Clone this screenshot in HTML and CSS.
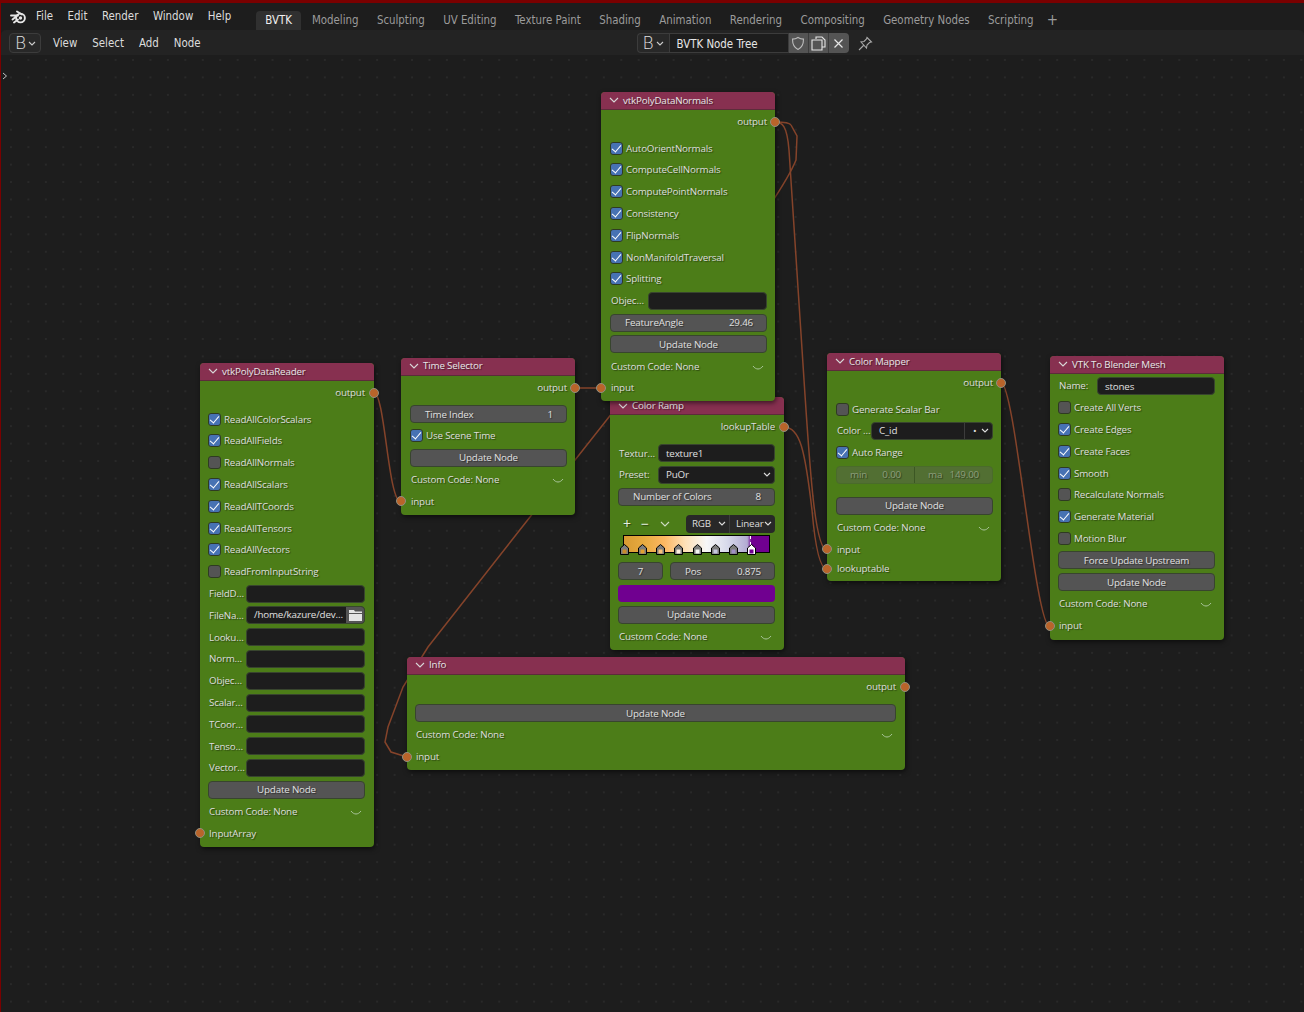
FILE: index.html
```html
<!DOCTYPE html>
<html lang="en">
<head>
  <meta charset="UTF-8">
  <title>BVTK Node Tree</title>
  <link rel="stylesheet" href="styles.css">
</head>
<body>
  <!-- Top bar -->
  <div class="topbar">
    <svg class="logo" width="17" height="14" viewBox="0 0 17 14"><circle cx="10.500" cy="8" r="4.400" fill="none" stroke="#e6e6e6" stroke-width="1.900"/><circle cx="10.500" cy="8" r="1.700" fill="#e6e6e6"/><path d="M1 5.500h7M2.500 9.500 8 5M4 12.500l4-3M7 1.500l5 3" stroke="#e6e6e6" stroke-width="1.900" stroke-linecap="round" fill="none"/></svg>
    <nav class="menu">
      <span>File</span><span>Edit</span><span>Render</span><span>Window</span><span>Help</span>
    </nav>
    <div class="tabs">
      <span class="tab active">BVTK</span>
      <span class="tab">Modeling</span>
      <span class="tab">Sculpting</span>
      <span class="tab">UV Editing</span>
      <span class="tab">Texture Paint</span>
      <span class="tab">Shading</span>
      <span class="tab">Animation</span>
      <span class="tab">Rendering</span>
      <span class="tab">Compositing</span>
      <span class="tab">Geometry Nodes</span>
      <span class="tab">Scripting</span>
      <span class="tab plus">+</span>
    </div>
  </div>

  <!-- Editor header -->
  <div class="header">
    <div class="editor-btn"><span class="b-icon">B</span><svg class="caret" width="8" height="5" viewBox="0 0 8 5"><path d="M1 1l3 3 3-3" fill="none" stroke="#ccc" stroke-width="1.100"/></svg></div>
    <nav class="editor-menu">
      <span>View</span><span>Select</span><span>Add</span><span>Node</span>
    </nav>
    <div class="tree-picker">
      <div class="tree-type"><span class="b-icon">B</span><svg class="caret" width="8" height="5" viewBox="0 0 8 5"><path d="M1 1l3 3 3-3" fill="none" stroke="#ccc" stroke-width="1.100"/></svg></div>
      <div class="tree-name">BVTK Node Tree</div>
      <div class="tree-btn"><svg width="14" height="15" viewBox="0 0 14 15"><path d="M7 1.500c2 1.200 3.800 1.600 5.500 1.600 0 5-1.500 8.700-5.500 10.400C3 11.800 1.500 8.100 1.500 3.100 3.200 3.100 5 2.700 7 1.500z" fill="none" stroke="#bdbdbd" stroke-width="1.100"/></svg></div>
      <div class="tree-btn"><svg width="15" height="15" viewBox="0 0 15 15"><path d="M5 3V1h6l3 3v7h-3M1 4h10v10H1z" fill="none" stroke="#e6e6e6" stroke-width="1.100"/></svg></div>
      <div class="tree-btn last"><svg width="11" height="11" viewBox="0 0 11 11"><path d="M1.500 1.500l8 8M9.500 1.500l-8 8" stroke="#e6e6e6" stroke-width="1.200"/></svg></div>
    </div>
    <svg class="pin" width="15" height="15" viewBox="0 0 15 15"><path d="M1 14l4.500-4.500M9 1.500l4.500 4.500-2 .5-2.500 2.500-.5 3L3 6l3-.5L8.500 3z" fill="none" stroke="#a8a8a8" stroke-width="1.100"/></svg>
  </div>

  <!-- Node canvas -->
  <div class="canvas">
    <svg class="sidebar-arrow" width="6" height="8" viewBox="0 0 6 8"><path d="M1 1l3.500 3L1 7" fill="none" stroke="#c4c4c4" stroke-width="1"/></svg>

    <svg class="wires" width="1304" height="957" viewBox="1 55 1304 957">
      <path d="M374 393C385 393 388 502 401 502"/>
      <path d="M575 388H601"/>
      <path d="M775 122C782 122 787 125 789 150L805 395C810 470 815 550 827 550"/>
      <path d="M775 122C785 122 790 123 791 125L797 136L796 160C790 175 780 190 770 205L609 417L530 517L428 647L403 687L388 727L385 742L391 752L407 757"/>
      <path d="M784 427C800 427 805 450 812 510C815 545 820 569 827 569"/>
      <path d="M1001 383C1015 383 1035 627 1050 627"/>
    </svg>

    <!-- Color Ramp sits behind vtkPolyDataNormals -->
    <section class="node node-ramp">
      <div class="node-title"><svg class="title-caret" width="10" height="6" viewBox="0 0 10 6"><path d="M1 1l4 4 4-4"/></svg>Color Ramp</div>
      <div class="row out">lookupTable<i class="socket right"></i></div>
      <div class="row gap"><label>Textur…</label><div class="field">texture1</div></div>
      <div class="row"><label>Preset:</label><div class="field select">PuOr<svg width="8" height="5" viewBox="0 0 8 5"><path d="M1 1l3 3 3-3" fill="none" stroke="#ddd" stroke-width="1.100"/></svg></div></div>
      <div class="row"><div class="num"><span>Number of Colors</span><span>8</span></div></div>
      <div class="row ramp-tools">
        <span class="tool">+</span><span class="tool">−</span>
        <svg class="tool-caret" width="10" height="6" viewBox="0 0 10 6"><path d="M1 1l4 4 4-4" fill="none" stroke="#cfdcc4" stroke-width="1.100"/></svg>
        <div class="ramp-mode"><span>RGB<svg width="8" height="5" viewBox="0 0 8 5"><path d="M1 1l3 3 3-3" fill="none" stroke="#ddd" stroke-width="1.100"/></svg></span><span>Linear<svg width="8" height="5" viewBox="0 0 8 5"><path d="M1 1l3 3 3-3" fill="none" stroke="#ddd" stroke-width="1.100"/></svg></span></div>
      </div>
      <div class="ramp">
        <div class="ramp-active"></div>
        <div class="ramp-handles">
          <svg class="handle" style="--c:#c98a2a" width="9" height="11" viewBox="0 0 9 11"><path d="M.5 10.500V4L4.500.5l4 3.500v6.500z"/><rect x="2.500" y="5.500" width="4" height="4"/></svg>
          <svg class="handle" style="--c:#e0a030" width="9" height="11" viewBox="0 0 9 11"><path d="M.5 10.500V4L4.500.5l4 3.500v6.500z"/><rect x="2.500" y="5.500" width="4" height="4"/></svg>
          <svg class="handle" style="--c:#f7c27a" width="9" height="11" viewBox="0 0 9 11"><path d="M.5 10.500V4L4.500.5l4 3.500v6.500z"/><rect x="2.500" y="5.500" width="4" height="4"/></svg>
          <svg class="handle" style="--c:#fdeedd" width="9" height="11" viewBox="0 0 9 11"><path d="M.5 10.500V4L4.500.5l4 3.500v6.500z"/><rect x="2.500" y="5.500" width="4" height="4"/></svg>
          <svg class="handle" style="--c:#f4f4f4" width="9" height="11" viewBox="0 0 9 11"><path d="M.5 10.500V4L4.500.5l4 3.500v6.500z"/><rect x="2.500" y="5.500" width="4" height="4"/></svg>
          <svg class="handle" style="--c:#c6c6e0" width="9" height="11" viewBox="0 0 9 11"><path d="M.5 10.500V4L4.500.5l4 3.500v6.500z"/><rect x="2.500" y="5.500" width="4" height="4"/></svg>
          <svg class="handle" style="--c:#a090c4" width="9" height="11" viewBox="0 0 9 11"><path d="M.5 10.500V4L4.500.5l4 3.500v6.500z"/><rect x="2.500" y="5.500" width="4" height="4"/></svg>
          <svg class="handle selected" style="--c:#700090" width="9" height="11" viewBox="0 0 9 11"><path d="M.5 10.500V4L4.500.5l4 3.500v6.500z"/><rect x="2.500" y="5.500" width="4" height="4"/></svg>
        </div>
      </div>
      <div class="row pos-row"><div class="num center index">7</div><div class="num"><span>Pos</span><span>0.875</span></div></div>
      <div class="row"><div class="swatch"></div></div>
      <div class="row"><button class="btn">Update Node</button></div>
      <div class="row custom">Custom Code: None<svg class="fold" width="12" height="6" viewBox="0 0 12 6"><path d="M1 1c3 4 7 4 10 0"/></svg></div>
    </section>

    <section class="node node-normals">
      <div class="node-title"><svg class="title-caret" width="10" height="6" viewBox="0 0 10 6"><path d="M1 1l4 4 4-4"/></svg>vtkPolyDataNormals</div>
      <div class="row out">output<i class="socket right"></i></div>
      <div class="row gap"><i class="check on"></i>AutoOrientNormals</div>
      <div class="row"><i class="check on"></i>ComputeCellNormals</div>
      <div class="row"><i class="check on"></i>ComputePointNormals</div>
      <div class="row"><i class="check on"></i>Consistency</div>
      <div class="row"><i class="check on"></i>FlipNormals</div>
      <div class="row"><i class="check on"></i>NonManifoldTraversal</div>
      <div class="row"><i class="check on"></i>Splitting</div>
      <div class="row"><label>Objec…</label><div class="field"></div></div>
      <div class="row"><div class="num"><span>FeatureAngle</span><span>29.46</span></div></div>
      <div class="row"><button class="btn">Update Node</button></div>
      <div class="row custom">Custom Code: None<svg class="fold" width="12" height="6" viewBox="0 0 12 6"><path d="M1 1c3 4 7 4 10 0"/></svg></div>
      <div class="row">input<i class="socket left"></i></div>
    </section>

    <section class="node node-reader">
      <div class="node-title"><svg class="title-caret" width="10" height="6" viewBox="0 0 10 6"><path d="M1 1l4 4 4-4"/></svg>vtkPolyDataReader</div>
      <div class="row out">output<i class="socket right"></i></div>
      <div class="row gap"><i class="check on"></i>ReadAllColorScalars</div>
      <div class="row"><i class="check on"></i>ReadAllFields</div>
      <div class="row"><i class="check"></i>ReadAllNormals</div>
      <div class="row"><i class="check on"></i>ReadAllScalars</div>
      <div class="row"><i class="check on"></i>ReadAllTCoords</div>
      <div class="row"><i class="check on"></i>ReadAllTensors</div>
      <div class="row"><i class="check on"></i>ReadAllVectors</div>
      <div class="row"><i class="check"></i>ReadFromInputString</div>
      <div class="row"><label>FieldD…</label><div class="field"></div></div>
      <div class="row"><label>FileNa…</label><div class="field file"><span>/home/kazure/dev…</span><b class="folder"><svg width="13" height="12" viewBox="0 0 13 12"><path d="M0 1h5l1 1.500h7V4H0zM0 5h13v7H0z" fill="#e4e4e4"/></svg></b></div></div>
      <div class="row"><label>Looku…</label><div class="field"></div></div>
      <div class="row"><label>Norm…</label><div class="field"></div></div>
      <div class="row"><label>Objec…</label><div class="field"></div></div>
      <div class="row"><label>Scalar…</label><div class="field"></div></div>
      <div class="row"><label>TCoor…</label><div class="field"></div></div>
      <div class="row"><label>Tenso…</label><div class="field"></div></div>
      <div class="row"><label>Vector…</label><div class="field"></div></div>
      <div class="row"><button class="btn">Update Node</button></div>
      <div class="row custom">Custom Code: None<svg class="fold" width="12" height="6" viewBox="0 0 12 6"><path d="M1 1c3 4 7 4 10 0"/></svg></div>
      <div class="row">InputArray<i class="socket left"></i></div>
    </section>

    <section class="node node-time">
      <div class="node-title"><svg class="title-caret" width="10" height="6" viewBox="0 0 10 6"><path d="M1 1l4 4 4-4"/></svg>Time Selector</div>
      <div class="row out">output<i class="socket right"></i></div>
      <div class="row gap"><div class="num"><span>Time Index</span><span>1</span></div></div>
      <div class="row"><i class="check on"></i>Use Scene Time</div>
      <div class="row"><button class="btn">Update Node</button></div>
      <div class="row custom">Custom Code: None<svg class="fold" width="12" height="6" viewBox="0 0 12 6"><path d="M1 1c3 4 7 4 10 0"/></svg></div>
      <div class="row">input<i class="socket left"></i></div>
    </section>

    <section class="node node-mapper">
      <div class="node-title"><svg class="title-caret" width="10" height="6" viewBox="0 0 10 6"><path d="M1 1l4 4 4-4"/></svg>Color Mapper</div>
      <div class="row out">output<i class="socket right"></i></div>
      <div class="row gap"><i class="check"></i>Generate Scalar Bar</div>
      <div class="row"><label>Color …</label><div class="field pick"><span>C_id</span><b>•<svg width="8" height="5" viewBox="0 0 8 5"><path d="M1 1l3 3 3-3" fill="none" stroke="#ddd" stroke-width="1.100"/></svg></b></div></div>
      <div class="row"><i class="check on"></i>Auto Range</div>
      <div class="row"><div class="range"><div><span>min</span><span>0.00</span></div><div><span>ma</span><span>149.00</span></div></div></div>
      <div class="row gap-lg"><button class="btn">Update Node</button></div>
      <div class="row custom">Custom Code: None<svg class="fold" width="12" height="6" viewBox="0 0 12 6"><path d="M1 1c3 4 7 4 10 0"/></svg></div>
      <div class="row">input<i class="socket left"></i></div>
      <div class="row tight">lookuptable<i class="socket left"></i></div>
    </section>

    <section class="node node-mesh">
      <div class="node-title"><svg class="title-caret" width="10" height="6" viewBox="0 0 10 6"><path d="M1 1l4 4 4-4"/></svg>VTK To Blender Mesh</div>
      <div class="row"><label>Name:</label><div class="field">stones</div></div>
      <div class="row"><i class="check"></i>Create All Verts</div>
      <div class="row"><i class="check on"></i>Create Edges</div>
      <div class="row"><i class="check on"></i>Create Faces</div>
      <div class="row"><i class="check on"></i>Smooth</div>
      <div class="row"><i class="check"></i>Recalculate Normals</div>
      <div class="row"><i class="check on"></i>Generate Material</div>
      <div class="row"><i class="check"></i>Motion Blur</div>
      <div class="row"><button class="btn">Force Update Upstream</button></div>
      <div class="row"><button class="btn">Update Node</button></div>
      <div class="row custom">Custom Code: None<svg class="fold" width="12" height="6" viewBox="0 0 12 6"><path d="M1 1c3 4 7 4 10 0"/></svg></div>
      <div class="row">input<i class="socket left"></i></div>
    </section>

    <section class="node node-info">
      <div class="node-title"><svg class="title-caret" width="10" height="6" viewBox="0 0 10 6"><path d="M1 1l4 4 4-4"/></svg>Info</div>
      <div class="row out">output<i class="socket right"></i></div>
      <div class="row gap"><button class="btn">Update Node</button></div>
      <div class="row custom">Custom Code: None<svg class="fold" width="12" height="6" viewBox="0 0 12 6"><path d="M1 1c3 4 7 4 10 0"/></svg></div>
      <div class="row">input<i class="socket left"></i></div>
    </section>
  </div>
</body>
</html>
```

FILE: styles.css
```css
/* Window */
* {
  box-sizing: border-box;
}
html, body {
  height: 100%;
}
body {
  margin: 0;
  display: flex;
  flex-direction: column;
  overflow: hidden;
  background-color: #1d1d1d;
  border-top: 3px solid #7a0000;
  border-left: 1px solid #7a0000;
  color: #dedede;
  font-family: "Open Sans", "DejaVu Sans", sans-serif;
  font-size: 9.800px;
  letter-spacing: -0.18px;
}

/* Top bar */
.topbar {
  height: 27px;
  flex: none;
  display: flex;
  align-items: center;
  background-color: #1d1d1d;
  font-family: "DejaVu Sans Condensed", "DejaVu Sans", sans-serif;
  font-size: 11.400px;
  letter-spacing: 0;
}
.logo {
  margin: 0 0 0 9px;
}
.menu {
  display: flex;
  gap: 14.500px;
  margin-left: 9px;
  padding-bottom: 2px;
  color: #dcdcdc;
}
.tabs {
  display: flex;
  align-items: flex-end;
  align-self: flex-end;
  margin-left: 25px;
  height: 20px;
  color: #9b9b9b;
}
.tab {
  height: 19px;
  padding: 2px 9.200px 0;
  white-space: nowrap;
}
.tab.active {
  margin-right: 1.500px;
  background-color: #303030;
  border-radius: 4px 4px 0 0;
  color: #f0f0f0;
}
.tab.plus {
  padding: 0 0 0 4px;
  font-size: 15px;
}

/* Editor header */
.header {
  height: 25px;
  flex: none;
  display: flex;
  align-items: center;
  padding: 1px 0 0 8px;
  background-color: #232323;
  border-radius: 5px 5px 0 0;
  font-family: "DejaVu Sans Condensed", "DejaVu Sans", sans-serif;
  font-size: 11.400px;
  letter-spacing: 0;
}
.editor-btn, .tree-type {
  height: 20px;
  display: flex;
  align-items: center;
  gap: 2px;
  padding-left: 5px;
  background-color: #282828;
  border: 1px solid #3c3c3c;
  border-radius: 4px;
}
.editor-btn {
  width: 32px;
}
.b-icon {
  font-family: "DejaVu Sans", sans-serif;
  font-weight: 200;
  font-size: 17px;
  line-height: 1;
  color: #e0e0e0;
}
.editor-menu {
  display: flex;
  gap: 15px;
  margin-left: 12px;
  color: #dcdcdc;
}
.tree-picker {
  display: flex;
  height: 20px;
  margin-left: 436px;
}
.tree-type {
  width: 32px;
  border-radius: 4px 0 0 4px;
  border-right: none;
}
.tree-name {
  width: 120px;
  padding: 3px 0 0 7px;
  background-color: #1d1d1d;
  border: 1px solid #3c3c3c;
  color: #e6e6e6;
}
.tree-btn {
  width: 20px;
  display: flex;
  align-items: center;
  justify-content: center;
  background-color: #545454;
  border-right: 1px solid #3c3c3c;
}
.tree-btn.last {
  border-right: none;
  border-radius: 0 4px 4px 0;
}
.pin {
  margin-left: 9px;
}

/* Canvas */
.canvas {
  position: relative;
  flex: 1;
  overflow: hidden;
  background-color: #1d1d1d;
  background-image: radial-gradient(circle at 1px 1px, #292929 1px, transparent 1.300px);
  background-size: 17.450px 17.450px;
  background-position: 9px 4px;
}
.sidebar-arrow {
  position: absolute;
  left: 1px;
  top: 17px;
}
.wires {
  position: absolute;
  left: 0;
  top: 0;
}
.wires path {
  fill: none;
  stroke: #84432a;
  stroke-width: 1.500;
}

/* Nodes */
.node {
  position: absolute;
  width: 174px;
  padding-bottom: 3px;
  background-color: #4c7d18;
  border-radius: 4px;
  box-shadow: 1px 2px 5px rgba(0,0,0,0.55);
  text-shadow: 1px 1px 1px rgba(0,0,0,0.45);
}
.node-reader { left: 199px; top: 308px; }
.node-time { left: 400px; top: 303px; }
.node-normals { left: 600px; top: 37px; padding-bottom: 2px; }
.node-ramp { left: 609px; top: 342px; padding-bottom: 2px; }
.node-mapper { left: 826px; top: 298px; }
.node-mesh { left: 1049px; top: 301px; }
.node-info { left: 406px; top: 602px; width: 498px; padding-bottom: 2px; }

.node-title {
  height: 18px;
  display: flex;
  align-items: center;
  padding: 0 0 1px 8px;
  background-color: #873050;
  border-bottom: 1px solid #5c2c3a;
  border-radius: 4px 4px 0 0;
  color: #e8e8e8;
}
.node-ramp .node-title {
  padding-bottom: 0;
}
.node-time .node-title, .node-info .node-title {
  padding-bottom: 2px;
}
.title-caret {
  margin-right: 4px;
}
.title-caret path {
  fill: none;
  stroke: #d8d8d8;
  stroke-width: 1.100;
}
.node-title + .row {
  margin-top: 1px;
}
.row {
  position: relative;
  height: 21.800px;
  display: flex;
  align-items: center;
  padding: 0 9px;
  white-space: nowrap;
}
.node-normals .row, .node-time .row, .node-mapper .row {
  padding: 0 8px 0 10px;
}
.row.out {
  justify-content: flex-end;
}
.row.gap {
  margin-top: 4.500px;
}
.row.gap-lg {
  margin-top: 9.500px;
}
.row.tight {
  height: 19px;
  margin-top: -1px;
}
.row.custom {
  justify-content: space-between;
}
.fold {
  margin: 3px 3px 0 0;
}
.fold path {
  fill: none;
  stroke: #a9c59a;
  stroke-width: 1;
}
.socket {
  position: absolute;
  top: 50%;
  width: 10px;
  height: 10px;
  margin-top: -5px;
  background-color: #b9642a;
  border: 1.500px solid #8f8f80;
  border-radius: 50%;
}
.socket.right {
  right: -5px;
}
.socket.left {
  left: -5px;
}
.check {
  position: relative;
  width: 13px;
  height: 13px;
  flex: none;
  margin: 0 3px 0 -1px;
  background-color: #545454;
  border: 1px solid #2f3b22;
  border-radius: 3px;
}
.check.on {
  background-color: #4772b3;
}
.check.on::after {
  content: "";
  position: absolute;
  left: 3px;
  top: 0;
  width: 4px;
  height: 8px;
  border: solid #fff;
  border-width: 0 1.700px 1.700px 0;
  transform: rotate(40deg);
}
.row label {
  width: 37px;
  flex: none;
}
.node-mesh label {
  width: 38px;
}
.node-ramp label {
  width: 39px;
}
.node-mapper label {
  width: 34px;
}
.field {
  flex: 1;
  height: 18px;
  padding: 1px 0 0 7px;
  background-color: #1d1d1d;
  border: 1px solid #38452e;
  border-radius: 4px;
  color: #e0e0e0;
  line-height: 15px;
  text-shadow: none;
}
.field.select {
  display: flex;
  justify-content: space-between;
  align-items: center;
  padding: 0 3px 0 7px;
}
.field.file {
  display: flex;
  justify-content: space-between;
  padding: 0 0 0 7px;
  overflow: hidden;
}
.folder {
  width: 18px;
  display: flex;
  align-items: center;
  justify-content: center;
  background-color: #545454;
}
.field.pick {
  display: flex;
  justify-content: space-between;
  padding: 0 0 0 7px;
  overflow: hidden;
}
.field.pick b {
  width: 28px;
  display: flex;
  align-items: center;
  justify-content: space-between;
  padding: 0 3px 0 8px;
  font-weight: normal;
  border-left: 1px solid #3c3c3c;
}
.num {
  flex: 1;
  height: 18px;
  margin-left: -1px;
  display: flex;
  align-items: center;
  justify-content: space-between;
  padding: 0 13px 0 14px;
  background-color: #545454;
  border: 1px solid #38452e;
  border-radius: 4px;
  color: #e0e0e0;
}
.btn {
  flex: 1;
  height: 18px;
  margin-left: -1px;
  padding: 0;
  background-color: #545454;
  border: 1px solid #38452e;
  border-radius: 4px;
  color: #e0e0e0;
  font: inherit;
  letter-spacing: inherit;
  text-shadow: inherit;
}
.range {
  flex: 1;
  height: 18px;
  margin-left: -1px;
  display: flex;
  background-color: #526f33;
  border: 1px solid #4a6b2b;
  border-radius: 4px;
  color: #8d9e7c;
}
.range div {
  flex: 1;
  display: flex;
  align-items: center;
  justify-content: space-between;
  padding: 0 13px;
}
.range div + div {
  border-left: 1px solid #3c5724;
}

/* Color ramp */
.ramp-tools {
  margin-top: 5px;
  padding-left: 13px;
}
.tool {
  width: 18px;
  color: #e6efe0;
  font-size: 14px;
  line-height: 1;
}
.tool-caret {
  margin-left: 1px;
}
.ramp-mode {
  display: flex;
  height: 18px;
  margin-left: auto;
  background-color: #282828;
  border-radius: 4px;
  text-shadow: none;
}
.ramp-mode span {
  width: 43px;
  display: flex;
  align-items: center;
  justify-content: space-between;
  padding: 0 3px 0 6px;
}
.ramp-mode span + span {
  width: 46px;
  border-left: 1px solid #3c3c3c;
}
.ramp {
  position: relative;
  height: 18px;
  margin: 1px 14px 0 13px;
  border: 1px solid #000;
  background-image: linear-gradient(90deg, #d89a32 0%, #e8ab40 14%, #fdb863 28%, #fee0b6 42%, #f7f7f7 57%, #d8daeb 71%, #b2abd2 85%, #700090 88%, #700090 100%);
}
.ramp-active {
  position: absolute;
  left: 126px;
  top: 0;
  height: 9px;
  border-left: 1px dashed #fff;
}
.ramp-handles {
  position: absolute;
  left: -4px;
  right: 13px;
  bottom: -3px;
  display: flex;
  justify-content: space-between;
}
.handle path {
  fill: #7d7d7d;
  stroke: #000;
}
.handle rect {
  fill: var(--c);
}
.handle.selected path {
  fill: #fff;
}
.pos-row {
  gap: 8px;
  margin-top: 7px;
}
.num.center {
  justify-content: center;
}
.index {
  flex: none;
  width: 45px;
  padding: 0;
}
.swatch {
  flex: 1;
  height: 17px;
  margin-left: -1px;
  background-color: #700090;
  border-radius: 4px;
}
```
